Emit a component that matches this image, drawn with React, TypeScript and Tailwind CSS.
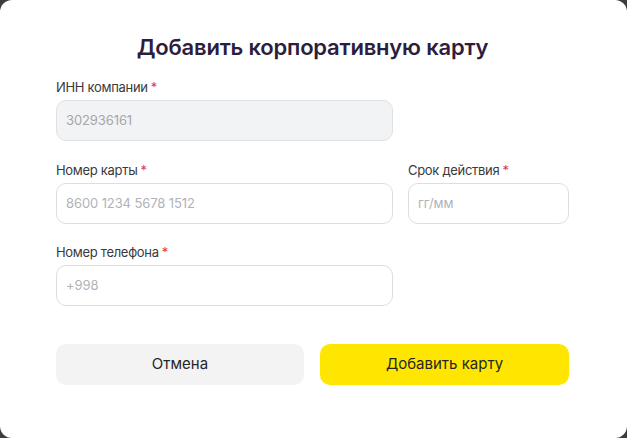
import React from "react";

function Label({ children }: { children: React.ReactNode }) {
  return (
    <div className="text-[13px] leading-[16px] tracking-[-0.3px] text-[#3a3a3a] mb-[5px]">
      {children}
      <span className="text-[#e53945] ml-[3px]">*</span>
    </div>
  );
}

function Input({ placeholder, disabled }: { placeholder: string; disabled?: boolean }) {
  return (
    <div
      className={
        "h-[41px] rounded-[10px] border flex items-center px-[9px] text-[13px] tracking-[-0.1px] " +
        (disabled
          ? "bg-[#f2f3f5] border-[#dfe1e5] text-[#a4a7ad]"
          : "bg-white border-[#dcdee2] text-[#b0b3b8]")
      }
    >
      {placeholder}
    </div>
  );
}

export default function App() {
  return (
    <div
      className="w-[627px] h-[438px] bg-[#3c3c3c]"
      style={{ fontFamily: "Inter, 'Noto Sans', sans-serif" }}
    >
      <div className="w-full h-full bg-white rounded-[12px] pl-[56px] pr-[58px] pt-[32px]">
        <h1 className="text-center text-[22px] leading-[30px] font-semibold text-[#2d1e3e] tracking-[-0.2px] mb-[17px]">
          Добавить корпоративную карту
        </h1>
        <div className="grid grid-cols-[337px_161px] gap-x-[15px]">
          <div>
            <Label>ИНН компании</Label>
            <Input placeholder="302936161" disabled />
          </div>
          <div />
          <div className="mt-[21px]">
            <Label>Номер карты</Label>
            <Input placeholder="8600 1234 5678 1512" />
          </div>
          <div className="mt-[21px]">
            <Label>Срок действия</Label>
            <Input placeholder="гг/мм" />
          </div>
          <div className="mt-[20px]">
            <Label>Номер телефона</Label>
            <Input placeholder="+998" />
          </div>
          <div />
        </div>
        <div className="flex gap-[16px] mt-[38px]">
          <button className="w-[248px] h-[41px] rounded-[10px] bg-[#f3f3f3] text-[15px] text-[#262626]">
            Отмена
          </button>
          <button className="w-[249px] h-[41px] rounded-[10px] bg-[#ffe600] text-[15px] text-[#262626]">
            Добавить карту
          </button>
        </div>
      </div>
    </div>
  );
}
